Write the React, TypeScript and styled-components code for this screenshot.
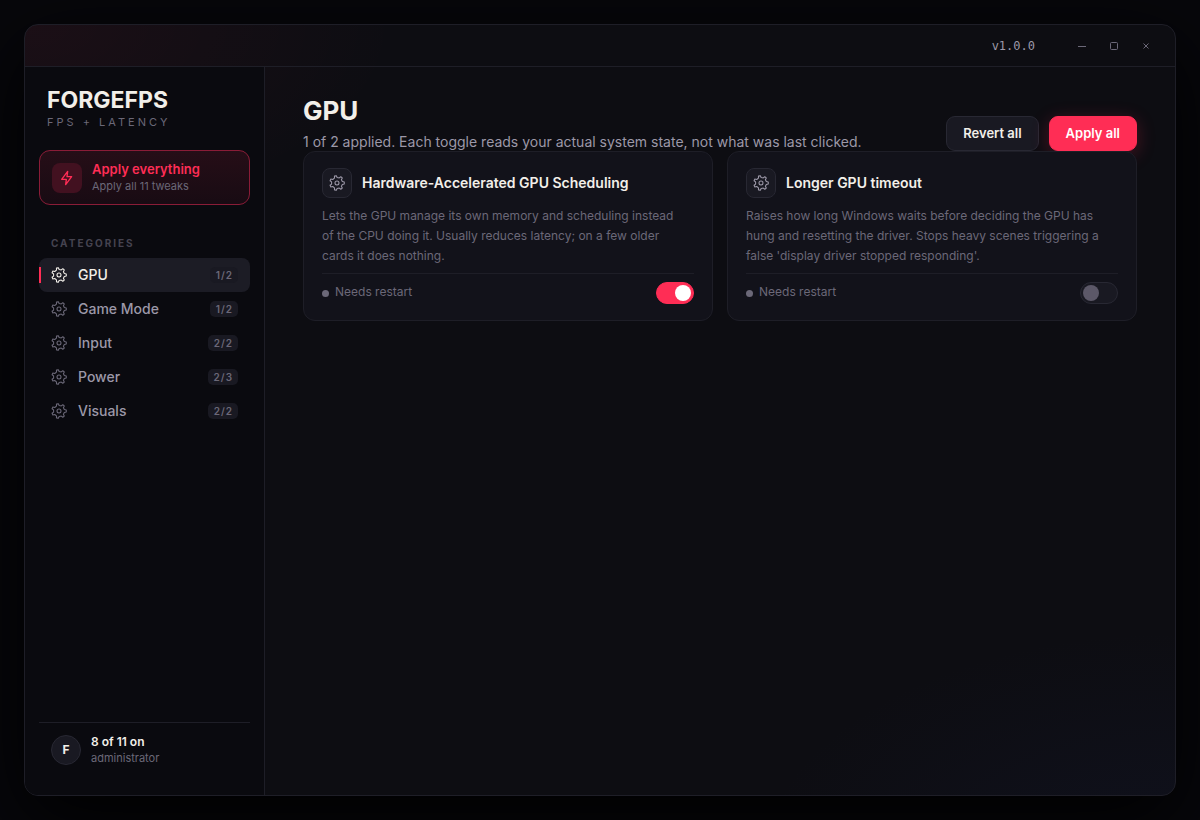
import React, { useState } from "react";
import styled, { createGlobalStyle, css } from "styled-components";

const GlobalStyle = createGlobalStyle`
  * { box-sizing: border-box; }
  html, body, #root { height: 100%; }
  body {
    margin: 0;
    background: #07070b;
    color: #f2efe9;
    font-family: Inter, "Liberation Sans", sans-serif;
    font-size: 14px;
  }
  button { font-family: inherit; cursor: pointer; }
  h1, h2, p { margin: 0; }
`;

const Desktop = styled.div`
  display: flex;
  min-height: 100%;
  padding: 24px;
`;

const Window = styled.div`
  flex: 1;
  min-width: 0;
  display: flex;
  flex-direction: column;
  overflow: hidden;
  border: 1px solid #1e1e27;
  border-radius: 14px;
  background:
    radial-gradient(700px 400px at 100% 110%, rgba(30, 40, 90, 0.16), transparent 60%),
    radial-gradient(620px 320px at 0% 0%, rgba(255, 45, 85, 0.06), transparent 60%),
    #0d0d12;
  box-shadow: 0 24px 80px #000000;
`;

const TitleBar = styled.header`
  display: flex;
  align-items: center;
  justify-content: flex-end;
  height: 42px;
  padding-right: 13px;
  border-bottom: 1px solid #1e1e27;
`;

const Version = styled.span`
  margin-right: 31px;
  color: #9c98a8;
  font-family: "DejaVu Sans Mono", monospace;
  font-size: 12px;
`;

const WindowButton = styled.button`
  display: grid;
  place-items: center;
  width: 32px;
  height: 26px;
  padding: 0;
  border: 0;
  background: none;
  color: #6b6878;
`;

const Body = styled.div`
  flex: 1;
  display: flex;
`;

const Sidebar = styled.aside`
  display: flex;
  flex-direction: column;
  flex: none;
  width: 240px;
  padding: 20px 14px;
  border-right: 1px solid #1e1e27;
  background: #0a0a0f;
`;

const Brand = styled.div`
  padding: 0 8px;
`;

const BrandName = styled.div`
  font-size: 23px;
  font-weight: 700;
  line-height: 26px;
`;

const BrandTag = styled.div`
  margin-top: 2px;
  color: #6b6878;
  font-size: 11px;
  line-height: 14px;
  letter-spacing: 3px;
`;

const ApplyEverything = styled.button`
  display: flex;
  align-items: center;
  gap: 10px;
  margin: 21px 0 32px;
  padding: 11px 12px;
  border: 1px solid #8a1c37;
  border-radius: 11px;
  background: linear-gradient(#260e17, #180b13);
  text-align: left;
`;

const BoltTile = styled.span`
  display: grid;
  place-items: center;
  width: 30px;
  height: 30px;
  border-radius: 8px;
  background: #421120;
  color: #ff2d55;
`;

const Stack = styled.span`
  display: flex;
  flex-direction: column;
  gap: 2px;
`;

const ApplyTitle = styled.span`
  color: #ff2d55;
  font-size: 13px;
  font-weight: 600;
  line-height: 15px;
`;

const Muted = styled.span`
  color: #6b6878;
  font-size: 11px;
  line-height: 14px;
`;

const SectionLabel = styled.h2`
  padding: 0 12px;
  margin-bottom: 8px;
  color: #45434f;
  font-size: 10px;
  font-weight: 700;
  line-height: 13px;
  letter-spacing: 2px;
`;

const NavItem = styled.button<{ $active: boolean }>`
  position: relative;
  display: flex;
  align-items: center;
  width: 100%;
  height: 34px;
  padding: 0 12px;
  border: 0;
  border-radius: 8px;
  background: ${(p) => (p.$active ? "#1c1c25" : "none")};
  color: ${(p) => (p.$active ? "#f2efe9" : "#9c98a8")};
  font-size: 14px;
  font-weight: 500;
  text-align: left;

  svg { color: ${(p) => (p.$active ? "#f2efe9" : "#6b6878")}; }

  ${(p) =>
    p.$active &&
    css`
      &::before {
        content: "";
        position: absolute;
        left: 0;
        top: 9px;
        bottom: 9px;
        width: 2px;
        background: #ff2d55;
      }
    `}
`;

const NavLabel = styled.span`
  flex: 1;
  margin-left: 11px;
  padding-bottom: 2px;
`;

const Badge = styled.span`
  padding: 0 5px 0 6px;
  border-radius: 5px;
  background: #191922;
  color: #6b6878;
  font-size: 10px;
  font-weight: 600;
  line-height: 16px;
  letter-spacing: 1px;
`;

const Account = styled.div`
  display: flex;
  align-items: center;
  gap: 10px;
  margin-top: auto;
  padding: 11px 12px 10px;
  border-top: 1px solid #1e1e27;
`;

const Avatar = styled.span`
  display: grid;
  place-items: center;
  width: 30px;
  height: 30px;
  border: 1px solid #282833;
  border-radius: 50%;
  background: #191922;
  font-size: 12px;
  font-weight: 700;
`;

const AccountTitle = styled.span`
  font-size: 12px;
  font-weight: 600;
  line-height: 15px;
`;

const Main = styled.main`
  flex: 1;
  min-width: 0;
  padding: 28px 38px;
`;

const PageHead = styled.div`
  display: flex;
  align-items: flex-end;
  justify-content: space-between;
`;

const PageTitle = styled.h1`
  font-size: 26px;
  font-weight: 700;
  line-height: 32px;
`;

const PageSub = styled.p`
  margin-top: 6px;
  color: #9c98a8;
  font-size: 14px;
  line-height: 18px;
`;

const Actions = styled.div`
  display: flex;
  gap: 10px;
`;

const Button = styled.button<{ $primary?: boolean }>`
  padding: 9px 16px;
  border: 1px solid ${(p) => (p.$primary ? "#ff2d55" : "#282833")};
  border-radius: 9px;
  background: ${(p) => (p.$primary ? "#ff2d55" : "#191922")};
  color: ${(p) => (p.$primary ? "#ffffff" : "#f2efe9")};
  box-shadow: ${(p) => (p.$primary ? "0 4px 18px rgba(255, 45, 85, 0.25)" : "none")};
  font-size: 13px;
  font-weight: 600;
  line-height: 15px;
`;

const Cards = styled.div`
  position: relative;
  display: grid;
  grid-template-columns: repeat(auto-fill, minmax(330px, 1fr));
  gap: 14px;
`;

const Card = styled.article`
  padding: 16px 18px;
  border: 1px solid #1e1e27;
  border-radius: 12px;
  background: #12121a;
`;

const CardHead = styled.div`
  display: flex;
  align-items: center;
  gap: 10px;
`;

const IconTile = styled.span`
  display: grid;
  place-items: center;
  width: 30px;
  height: 30px;
  border: 1px solid #282833;
  border-radius: 8px;
  background: #191922;
  color: #9c98a8;
`;

const CardTitle = styled.label`
  padding-bottom: 2px;
  font-size: 14px;
  font-weight: 600;
`;

const CardText = styled.p`
  margin: 8px 0 7px;
  padding-right: 16px;
  color: #6b6878;
  font-size: 12px;
  line-height: 20px;
`;

const CardFoot = styled.div`
  display: flex;
  align-items: center;
  justify-content: space-between;
  padding-top: 8px;
  border-top: 1px solid #1e1e27;
`;

const Note = styled.span`
  display: flex;
  align-items: center;
  gap: 6px;

  &::before {
    content: "";
    width: 7px;
    height: 7px;
    border-radius: 50%;
    background: #6b6878;
  }
`;

const NoteText = styled.span`
  padding-bottom: 3px;
  color: #6b6878;
  font-size: 12px;
`;

const Toggle = styled.input`
  appearance: none;
  display: flex;
  align-items: center;
  width: 38px;
  height: 22px;
  margin: 0;
  padding: 0 2px;
  border: 1px solid #282833;
  border-radius: 11px;
  background: #191922;
  cursor: pointer;

  &::before {
    content: "";
    width: 16px;
    height: 16px;
    border-radius: 50%;
    background: #5c5868;
  }

  &:checked {
    justify-content: flex-end;
    border-color: #ff2d55;
    background: #ff2d55;
  }

  &:checked::before { background: #ffffff; }
`;

const Gear = () => (
  <svg width="16" height="16" viewBox="0 0 24 24" fill="none" stroke="currentColor" strokeWidth="1.6" strokeLinecap="round" strokeLinejoin="round" aria-hidden="true">
    <circle cx="12" cy="12" r="3" />
    <path d="M20 9.9L22.9 10.6L22.9 13.4L20 14.1L18.6 17L19.9 19.6L17.7 21.4L15.4 19.6L12.2 20.3L11 23L8.2 22.3L8.2 19.4L5.6 17.3L2.8 18L1.6 15.4L3.9 13.6L3.9 10.4L1.6 8.6L2.8 6L5.6 6.7L8.2 4.6L8.2 1.7L11 1L12.2 3.7L15.4 4.4L17.7 2.6L19.9 4.4L18.6 7z" />
  </svg>
);

const Bolt = () => (
  <svg width="16" height="16" viewBox="0 0 24 24" fill="none" stroke="currentColor" strokeWidth="2" strokeLinecap="round" strokeLinejoin="round" aria-hidden="true">
    <path d="M13 2 4 14h7l-1 8 9-12h-7l1-8z" />
  </svg>
);

const Minimize = () => (
  <svg width="10" height="10" viewBox="0 0 10 10" fill="none" stroke="currentColor" aria-hidden="true">
    <path d="M1 5.5h8" />
  </svg>
);

const Maximize = () => (
  <svg width="10" height="10" viewBox="0 0 10 10" fill="none" stroke="currentColor" aria-hidden="true">
    <rect x="1.5" y="1.5" width="7" height="7" rx="1" />
  </svg>
);

const Close = () => (
  <svg width="10" height="10" viewBox="0 0 10 10" fill="none" stroke="currentColor" aria-hidden="true">
    <path d="M2.5 2.5l5 5M7.5 2.5l-5 5" />
  </svg>
);

const categories = [
  { name: "GPU", count: "1/2" },
  { name: "Game Mode", count: "1/2" },
  { name: "Input", count: "2/2" },
  { name: "Power", count: "2/3" },
  { name: "Visuals", count: "2/2" },
];

const tweaks = [
  {
    id: "hags",
    title: "Hardware-Accelerated GPU Scheduling",
    text: "Lets the GPU manage its own memory and scheduling instead of the CPU doing it. Usually reduces latency; on a few older cards it does nothing.",
    on: true,
  },
  {
    id: "tdr",
    title: "Longer GPU timeout",
    text: "Raises how long Windows waits before deciding the GPU has hung and resetting the driver. Stops heavy scenes triggering a false 'display driver stopped responding'.",
    on: false,
  },
];

export default function App() {
  const [active, setActive] = useState("GPU");

  return (
    <>
      <GlobalStyle />
      <Desktop>
        <Window>
          <TitleBar>
            <Version>v1.0.0</Version>
            <WindowButton aria-label="Minimize"><Minimize /></WindowButton>
            <WindowButton aria-label="Maximize"><Maximize /></WindowButton>
            <WindowButton aria-label="Close"><Close /></WindowButton>
          </TitleBar>
          <Body>
            <Sidebar>
              <Brand>
                <BrandName>FORGEFPS</BrandName>
                <BrandTag>FPS + LATENCY</BrandTag>
              </Brand>
              <ApplyEverything>
                <BoltTile><Bolt /></BoltTile>
                <Stack>
                  <ApplyTitle>Apply everything</ApplyTitle>
                  <Muted>Apply all 11 tweaks</Muted>
                </Stack>
              </ApplyEverything>
              <SectionLabel>CATEGORIES</SectionLabel>
              <nav>
                {categories.map((c) => (
                  <NavItem key={c.name} $active={c.name === active} onClick={() => setActive(c.name)}>
                    <Gear />
                    <NavLabel>{c.name}</NavLabel>
                    <Badge>{c.count}</Badge>
                  </NavItem>
                ))}
              </nav>
              <Account>
                <Avatar>F</Avatar>
                <Stack>
                  <AccountTitle>8 of 11 on</AccountTitle>
                  <Muted>administrator</Muted>
                </Stack>
              </Account>
            </Sidebar>
            <Main>
              <PageHead>
                <div>
                  <PageTitle>GPU</PageTitle>
                  <PageSub>1 of 2 applied. Each toggle reads your actual system state, not what was last clicked.</PageSub>
                </div>
                <Actions>
                  <Button>Revert all</Button>
                  <Button $primary>Apply all</Button>
                </Actions>
              </PageHead>
              <Cards>
                {tweaks.map((t) => (
                  <Card key={t.id}>
                    <CardHead>
                      <IconTile><Gear /></IconTile>
                      <CardTitle htmlFor={t.id}>{t.title}</CardTitle>
                    </CardHead>
                    <CardText>{t.text}</CardText>
                    <CardFoot>
                      <Note><NoteText>Needs restart</NoteText></Note>
                      <Toggle id={t.id} type="checkbox" role="switch" defaultChecked={t.on} />
                    </CardFoot>
                  </Card>
                ))}
              </Cards>
            </Main>
          </Body>
        </Window>
      </Desktop>
    </>
  );
}
